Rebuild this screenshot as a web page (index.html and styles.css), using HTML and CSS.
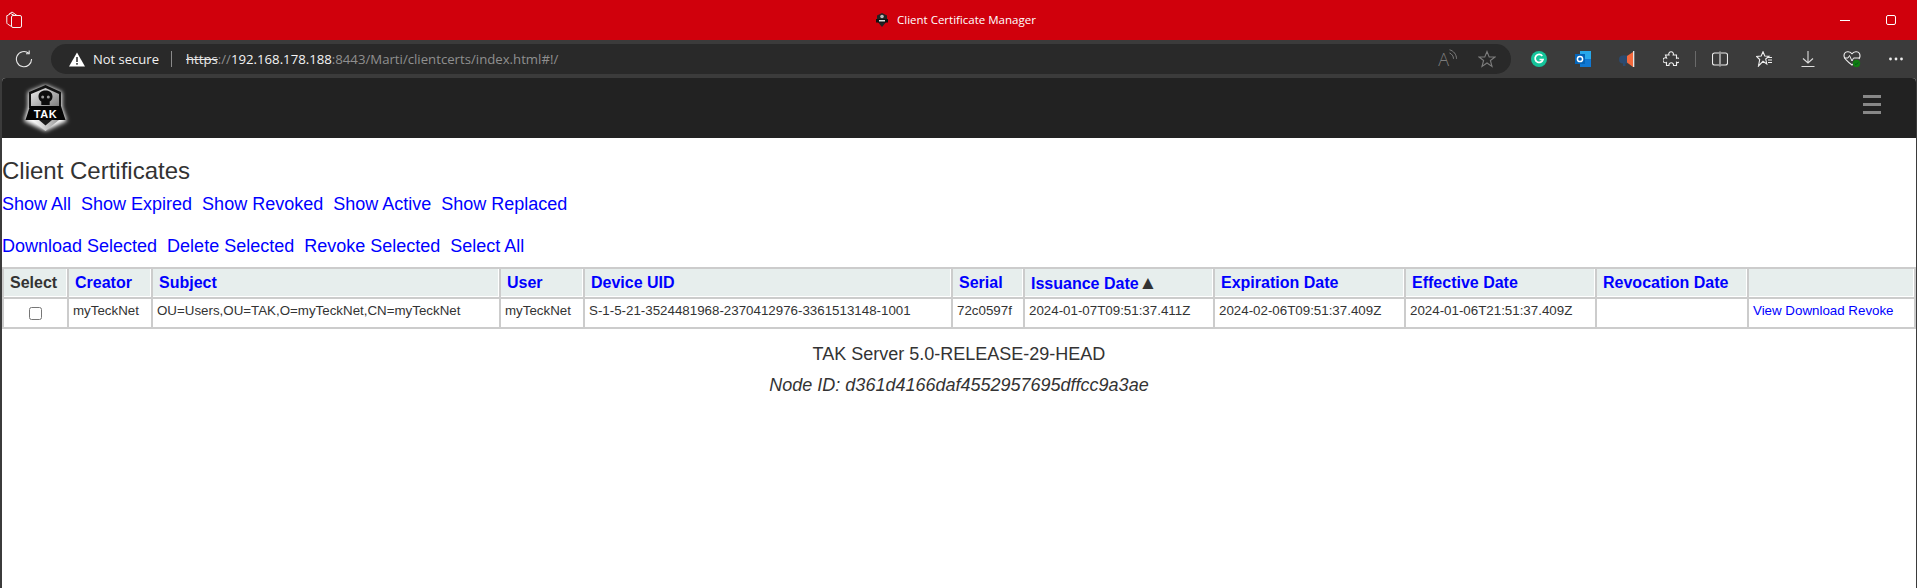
FILE: index.html
```html
<!DOCTYPE html>
<html lang="en">
<head>
<meta charset="utf-8">
<title>Client Certificate Manager</title>
<link rel="stylesheet" href="styles.css">
</head>
<body>
<header class="titlebar">
  <svg class="tabs-icon" viewBox="0 0 17 17" width="17" height="17" fill="none" stroke="#f4f4f4" stroke-width="1"><rect x="6.500" y="4.500" width="10" height="12" rx="1.500"/><path d="M6.500 15.500 2.500 13a1.500 1.500 0 0 1-.7-1.200V4.500"/><path d="M1.800 5 5.500 2.500 9.500 4.500"/><path d="M4 3.200 7 1l5 3.500"/></svg>
  <div class="title-center">
    <svg class="title-favicon" viewBox="0 0 14 14" width="14" height="14"><path d="M7 0 12 2.500V8L7 14 2 8V2.500z" fill="#222"/><rect x="1" y="6" width="12" height="3.500" fill="#111"/><circle cx="7" cy="3.500" r="1.800" fill="#bbb"/><rect x="4" y="7" width="6" height="1.500" fill="#ddd"/></svg>
    <span>Client Certificate Manager</span>
  </div>
  <div class="win-controls">
    <span class="win-min"></span>
    <span class="win-max"></span>
  </div>
</header>

<div class="toolbar">
  <svg class="reload" viewBox="0 0 18 18" width="18" height="18" fill="none" stroke="#e8e8e8" stroke-width="1.100"><path d="M13.800 3.200A7.600 7.600 0 1 0 16.600 9"/><path d="M14.200 .5v3.200H11"/></svg>
  <div class="addressbar">
    <svg class="warn" viewBox="0 0 16 15" width="16" height="15"><path d="M8 0.500 16 14.500H0z" fill="#fff"/><rect x="7.200" y="5" width="1.600" height="5" fill="#333"/><rect x="7.200" y="11" width="1.600" height="1.700" fill="#333"/></svg>
    <span class="not-secure">Not secure</span>
    <span class="addr-sep"></span>
    <span class="url"><span class="url-scheme">https</span><span class="url-dim">://</span><span class="url-host">192.168.178.188</span><span class="url-dim">:8443/Marti/clientcerts/index.html#!/</span></span>
    <span class="addr-end">
      <span class="read-aloud">A<svg viewBox="0 0 9 13" width="9" height="13" fill="none" stroke="#7c7c7c" stroke-width="1"><path d="M.5 .8c4 1 7 4.500 7 9"/><path d="M.5 4c2.200 .8 4 3 4 5.800"/></svg></span>
      <svg viewBox="0 0 18 18" width="18" height="18" fill="none" stroke="#7c7c7c" stroke-width="1.100"><path d="M9 1.500 11.200 7H17l-4.600 3.500L14 16.500 9 13l-5 3.500 1.600-6L1 7h5.800z"/></svg>
    </span>
  </div>
  <div class="ext-icons">
    <span class="ext"><svg viewBox="0 0 16 16" width="16" height="16"><circle cx="8" cy="8" r="8" fill="#15c39a"/><path d="M11.300 5A4 4 0 1 0 12 8.500H8.500" fill="none" stroke="#fff" stroke-width="1.700"/></svg></span>
    <span class="ext"><svg viewBox="0 0 16 16" width="16" height="16"><rect x="5" y="0" width="11" height="8" fill="#28a8ea"/><rect x="5" y="8" width="11" height="8" fill="#0f78d4"/><rect x="0" y="3" width="10" height="10" fill="#0364b8"/><circle cx="5" cy="8" r="2.600" fill="none" stroke="#fff" stroke-width="1.500"/></svg></span>
    <span class="ext"><svg viewBox="0 0 16 16" width="16" height="16"><circle cx="4" cy="8.500" r="4" fill="#2b4a6f"/><rect x="4" y="4.500" width="5" height="8" fill="#2b4a6f"/><rect x="4" y="12" width="2.500" height="3" fill="#2b4a6f"/><path d="M8 5l6-4v15l-6-4.500z" fill="#f4693c"/><rect x="14" y="0" width="1.300" height="16" fill="#e6e6e6"/></svg></span>
    <span class="ext"><svg viewBox="0 0 16 16" width="16" height="16" fill="none" stroke="#eee" stroke-width="1.100"><path d="M2.500 4H6a2.300 2.300 0 1 1 4.200 0h3.300v3.300a2.300 2.300 0 1 1 0 4V14.500H10.500a2.300 2.300 0 1 0-4.500 0H3.500V11.500a2.500 2.500 0 1 1 0-4.500z"/></svg></span>
    <span class="bar-sep"></span>
    <span class="ext"><svg viewBox="0 0 16 16" width="16" height="16" fill="none" stroke="#eee" stroke-width="1.100"><path d="M7 2H2.500a2 2 0 0 0-2 2v8a2 2 0 0 0 2 2H7"/><path d="M9 2h4.500a2 2 0 0 1 2 2v8a2 2 0 0 1-2 2H9"/><path d="M8 .5v15"/></svg></span>
    <span class="ext"><svg viewBox="0 0 16 16" width="16" height="16" fill="none" stroke="#eee" stroke-width="1.100"><path d="M7 .8 8.800 5 13 5.300 9.700 8 10.800 13 7 10.300 2.500 15l1.200-6.500L.5 5.500 5.200 5z"/><path d="M11 6.500h5M12 9h4M12 11.500h4"/></svg></span>
    <span class="ext"><svg viewBox="0 0 16 16" width="16" height="16" fill="none" stroke="#ddd" stroke-width="1.100"><path d="M8 0v12M3 7.500 8 12l5-4.500M1.500 15.500h13"/></svg></span>
    <span class="ext"><svg viewBox="0 0 18 18" width="18" height="18"><path d="M9 4C7.500 1 1 0.500 1 6c0 3 4 6 8 9 1-.6 2-1.400 3-2.200M9 4c1.500-3 8-3.500 8 2 0 1-.5 2-1 3" fill="none" stroke="#eee" stroke-width="1.100"/><path d="M1 8h4l1.500-2.500L9 11l1.500-3H16" fill="none" stroke="#eee" stroke-width="1"/><circle cx="13.500" cy="13.500" r="3.700" fill="#107c10"/><path d="M11.800 13.500l1.200 1.200 2.200-2.200" fill="none" stroke="#052" stroke-width="1"/></svg></span>
    <span class="ext"><svg viewBox="0 0 14 4" width="14" height="4" fill="#eee"><circle cx="1.500" cy="2" r="1.400"/><circle cx="7" cy="2" r="1.400"/><circle cx="12.500" cy="2" r="1.400"/></svg></span>
  </div>
</div>

<div class="page">
  <nav class="navbar">
    <svg class="logo" viewBox="0 0 44 48" width="44" height="48">
      <defs><filter id="glow" x="-30%" y="-30%" width="160%" height="160%"><feGaussianBlur stdDeviation="2.200"/></filter>
      <linearGradient id="metal" x1="0" y1="0" x2="1" y2="1"><stop offset="0" stop-color="#f0f0f0"/><stop offset="1" stop-color="#777"/></linearGradient>
      <linearGradient id="tip" x1="0" y1="0" x2="1" y2="0"><stop offset="0" stop-color="#fff"/><stop offset="1" stop-color="#999"/></linearGradient></defs>
      <path d="M21.500 1 38 8V23L43 37 21.500 47 0 37 4 23V8z" fill="#fff" filter="url(#glow)"/>
      <path d="M21.500 1 37 8V24H5V8z" fill="#111"/>
      <path d="M21.500 4 35 10V24H7V10z" fill="url(#metal)"/>
      <path d="M21.500 6.500c-4.500 0-7 2.500-7 6 0 2.500 1.300 4.200 2.800 5V21h8.400v-3.500c1.500-.8 2.800-2.500 2.800-5 0-3.500-2.500-6-7-6z" fill="#0c0c0c"/>
      <circle cx="18.700" cy="13" r="1.500" fill="#999"/><circle cx="24.300" cy="13" r="1.500" fill="#999"/>
      <path d="M6 22H37L41.500 36H1.500z" fill="#050505"/>
      <path d="M8 36H35L21.500 47z" fill="url(#tip)"/>
      <path d="M15 36H28L21.500 41.500z" fill="#1a1a1a"/>
      <text x="21.500" y="34" class="logo-text" text-anchor="middle">TAK</text>
    </svg>
    <span class="hamburger"><i></i><i></i><i></i></span>
  </nav>
  <main class="content">
    <h3 class="page-title">Client Certificates</h3>
    <div class="link-row">
      <a href="#">Show All</a><a href="#">Show Expired</a><a href="#">Show Revoked</a><a href="#">Show Active</a><a href="#">Show Replaced</a>
    </div>
    <div class="link-row second">
      <a href="#">Download Selected</a><a href="#">Delete Selected</a><a href="#">Revoke Selected</a><a href="#">Select All</a>
    </div>
    <table class="cert-table">
      <colgroup>
        <col class="c-select"><col class="c-creator"><col class="c-subject"><col class="c-user"><col class="c-uid"><col class="c-serial"><col class="c-issue"><col class="c-exp"><col class="c-eff"><col class="c-rev"><col class="c-act">
      </colgroup>
      <thead>
        <tr>
          <th class="plain">Select</th>
          <th><a href="#">Creator</a></th>
          <th><a href="#">Subject</a></th>
          <th><a href="#">User</a></th>
          <th><a href="#">Device UID</a></th>
          <th><a href="#">Serial</a></th>
          <th><a href="#">Issuance Date</a><span class="sort">▲</span></th>
          <th><a href="#">Expiration Date</a></th>
          <th><a href="#">Effective Date</a></th>
          <th><a href="#">Revocation Date</a></th>
          <th></th>
        </tr>
      </thead>
      <tbody>
        <tr>
          <td class="check"><input type="checkbox"></td>
          <td>myTeckNet</td>
          <td>OU=Users,OU=TAK,O=myTeckNet,CN=myTeckNet</td>
          <td>myTeckNet</td>
          <td>S-1-5-21-3524481968-2370412976-3361513148-1001</td>
          <td>72c0597f</td>
          <td>2024-01-07T09:51:37.411Z</td>
          <td>2024-02-06T09:51:37.409Z</td>
          <td>2024-01-06T21:51:37.409Z</td>
          <td></td>
          <td><a href="#">View</a> <a href="#">Download</a> <a href="#">Revoke</a></td>
        </tr>
      </tbody>
    </table>
    <p class="version">TAK Server 5.0-RELEASE-29-HEAD</p>
    <p class="node"><em>Node ID: d361d4166daf4552957695dffcc9a3ae</em></p>
  </main>
</div>
</body>
</html>
```

FILE: styles.css
```css
* { box-sizing: border-box; }
html, body { margin: 0; height: 100%; }
body {
  display: flex;
  flex-direction: column;
  height: 588px;
  overflow: hidden;
  background: #3b3b3b;
  font-family: "Liberation Sans", Arial, sans-serif;
}

.titlebar {
  height: 40px;
  flex: none;
  background: #d0000c;
  color: #fff;
  display: flex;
  align-items: center;
  justify-content: space-between;
  padding: 0 21px 0 5px;
  position: relative;
}
.tabs-icon { margin-top: -1px; }
.title-center {
  position: absolute;
  left: 875px;
  top: 13px;
  display: flex;
  align-items: center;
  gap: 8px;
  font: 11.500px/14px "Open Sans", sans-serif;
}
.win-controls { display: flex; align-items: center; gap: 36px; }
.win-min { width: 10px; height: 1px; background: #fff; }
.win-max { width: 10px; height: 10px; border: 1px solid #fff; border-radius: 2px; }

.toolbar {
  height: 38px;
  flex: none;
  background: #3b3b3b;
  display: flex;
  align-items: center;
  padding: 0 0 0 15px;
  color: #fff;
}
.reload { flex: none; }
.addressbar {
  margin-left: 18px;
  width: 1460px;
  flex: none;
  height: 30px;
  background: #292929;
  border-radius: 15px;
  display: flex;
  align-items: center;
  padding: 0 15px 0 18px;
  font: 13px/18px "Open Sans", sans-serif;
}
.warn { flex: none; }
.not-secure { margin-left: 8px; color: #f0f0f0; }
.addr-sep { width: 1px; height: 16px; background: #8a8a8a; margin: 0 14px 0 12px; }
.url { font-size: 13.200px; }
.url-scheme { color: #e8e8e8; text-decoration: line-through; }
.url-dim { color: #8f8f8f; }
.url-host { color: #f4f4f4; }
.addr-end { margin-left: auto; display: flex; align-items: center; gap: 20px; }
.read-aloud { color: #7c7c7c; font-size: 18px; font-weight: 300; line-height: 20px; display: flex; align-items: flex-start; }
.ext-icons { flex: none; display: flex; align-items: center; padding-left: 6px; }
.ext { width: 44px; height: 18px; display: flex; align-items: center; justify-content: center; }
.bar-sep { width: 1px; height: 16px; background: #6a6a6a; margin: 0 2px 0 1.500px; }

.page {
  flex: 1;
  margin: 0 1px 0 2px;
  display: flex;
  flex-direction: column;
  background: #fff;
  border-radius: 4px 4px 0 0;
  overflow: hidden;
}
.navbar {
  height: 60px;
  flex: none;
  background: #222;
  display: flex;
  align-items: center;
  justify-content: space-between;
  padding: 0 35px 0 22px;
}
.logo { flex: none; margin-top: -1px; overflow: visible; }
.logo-text { font: 700 11px "Liberation Sans", sans-serif; fill: #fff; letter-spacing: .6px; }
.hamburger { display: flex; flex-direction: column; gap: 5px; margin-bottom: 8px; }
.hamburger i { display: block; width: 18px; height: 3px; background: #888; }

.content { flex: 1; color: #333; font-size: 14px; line-height: 20px; }
.page-title { margin: 20px 0 0; font-size: 24px; font-weight: 400; line-height: 26px; }
.link-row { font-size: 18px; line-height: 20px; margin-top: 10px; display: flex; gap: 10px; }
.link-row.second { margin-top: 22px; }
.link-row a, .cert-table a { color: #00f; text-decoration: none; }

.cert-table {
  margin-top: 11px;
  width: 100%;
  table-layout: fixed;
  border-collapse: collapse;
  border: 2px solid #ccc;
}
.c-select { width: 65px; }
.c-creator { width: 84px; }
.c-subject { width: 348px; }
.c-user { width: 84px; }
.c-uid { width: 368px; }
.c-serial { width: 72px; }
.c-issue { width: 190px; }
.c-exp { width: 191px; }
.c-eff { width: 191px; }
.c-rev { width: 152px; }
.cert-table th, .cert-table td { border: 2px solid #ccc; }
.cert-table th {
  background: #e7eeed;
  box-shadow: inset -1px -1px 0 #fff;
  height: 30px;
  padding: 0 5px 0 6px;
  font-size: 16px;
  line-height: 18px;
  text-align: left;
  font-weight: 700;
  white-space: nowrap;
}
.cert-table th.plain { color: #333; padding: 0 0 0 6px; }
.sort { color: #333; font-size: 19px; line-height: 18px; }
.cert-table td {
  height: 30px;
  padding: 0 4px 4px;
  font-size: 13.330px;
  line-height: 20px;
  white-space: nowrap;
}
.cert-table td.check { text-align: center; padding: 1px 0 0; }
.check input { margin: 0; width: 13px; height: 13px; vertical-align: middle; }
.version, .node { text-align: center; font-size: 18px; line-height: 20px; margin: 0; }
.version { margin-top: 15px; }
.node { margin-top: 11px; }
```
